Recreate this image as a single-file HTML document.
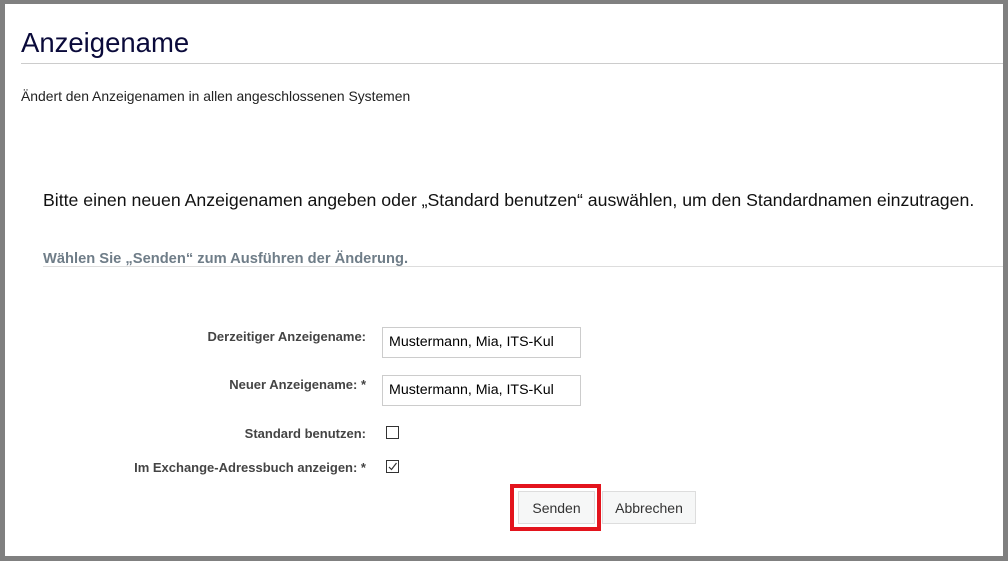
<!DOCTYPE html>
<html><head><meta charset="utf-8"><style>
body{margin:0;width:1008px;height:561px;background:#808080;font-family:"Liberation Sans",Arial,sans-serif;position:relative;overflow:hidden}
.p{position:absolute;left:5px;top:4px;width:998px;height:552px;background:#fff}
.a{position:absolute;white-space:nowrap}
.lab{position:absolute;right:642px;font-size:13px;font-weight:bold;color:#444;white-space:nowrap}
.in{position:absolute;left:382px;width:199px;height:31px;border:1px solid #ccc;box-sizing:border-box;font-size:14.2px;padding:6px 0 0 6px;color:#000}
.cb{position:absolute;left:386px;width:13px;height:13px;border:1px solid #333;box-sizing:border-box}
.btn{position:absolute;top:491px;height:33px;border:1px solid #ddd;background:#f6f7f7;box-sizing:border-box;font-size:14px;color:#333;text-align:center;line-height:33px}
</style></head><body>
<div class="p"></div>
<div class="a" style="left:21px;top:27px;font-size:27.5px;color:#0a0a3a">Anzeigename</div>
<div class="a" style="left:21px;top:63px;width:982px;height:1px;background:#ccc"></div>
<div class="a" style="left:21px;top:88px;font-size:13.9px;color:#222">Ändert den Anzeigenamen in allen angeschlossenen Systemen</div>
<div class="a" style="left:43px;top:190px;font-size:17.7px;color:#111">Bitte einen neuen Anzeigenamen angeben oder „Standard benutzen“ auswählen, um den Standardnamen einzutragen.</div>
<div class="a" style="left:43px;top:251px;font-size:14.7px;font-weight:bold;color:#6f7d88">Wählen Sie „Senden“ zum Ausführen der Änderung.</div>
<div class="a" style="left:43px;top:266px;width:960px;height:1px;background:#ddd"></div>
<div class="lab" style="top:329px">Derzeitiger Anzeigename:</div>
<div class="in" style="top:327px">Mustermann, Mia, ITS-Kul</div>
<div class="lab" style="top:377px">Neuer Anzeigename: *</div>
<div class="in" style="top:375px">Mustermann, Mia, ITS-Kul</div>
<div class="lab" style="top:426px">Standard benutzen:</div>
<div class="cb" style="top:426px"></div>
<div class="lab" style="top:460px">Im Exchange-Adressbuch anzeigen: *</div>
<div class="cb" style="top:460px"><svg width="11" height="11" style="position:absolute;left:0;top:0"><path d="M2 6 L4.5 8.5 L9.5 2" fill="none" stroke="#333" stroke-width="1.2"/></svg></div>
<div class="a" style="left:510px;top:484px;width:91px;height:47px;border:4px solid #e3141d;box-sizing:border-box"></div>
<div class="btn" style="left:518px;width:77px">Senden</div>
<div class="btn" style="left:602px;width:94px">Abbrechen</div>
</body></html>
